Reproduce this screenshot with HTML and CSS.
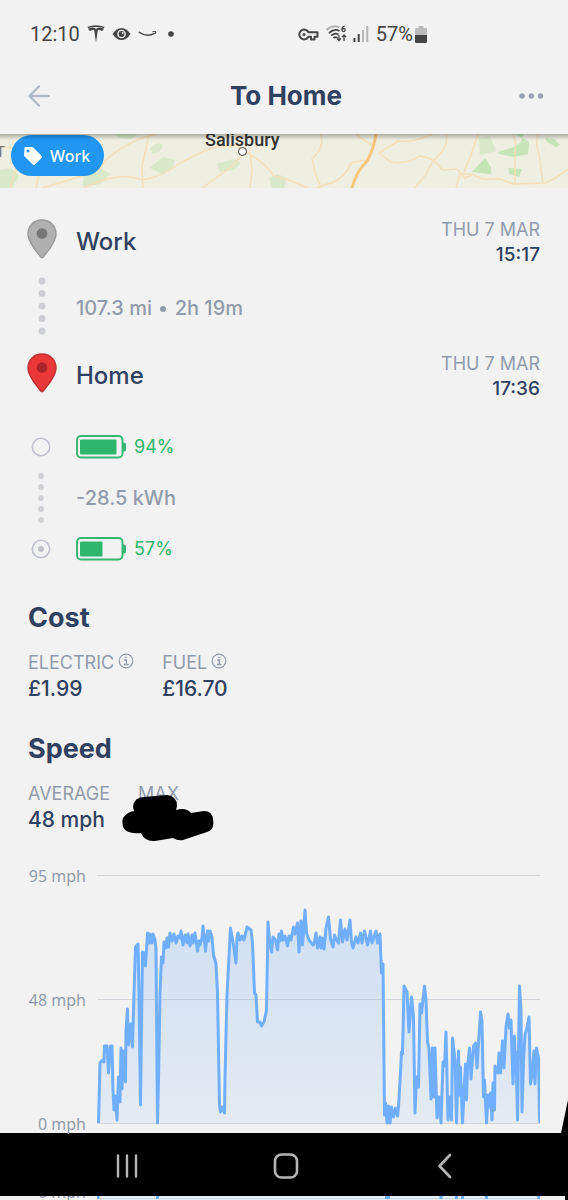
FILE: index.html
```html
<!DOCTYPE html>
<html lang="en">
<head>
<meta charset="utf-8">
<meta name="viewport" content="width=device-width, initial-scale=1">
<title>To Home</title>
<link rel="stylesheet" href="styles.css">
</head>
<body>
<div class="top">
  <div class="status">
    <div class="status-group">
      <span>12:10</span>
      <svg class="tesla" width="18" height="18" viewBox="0 0 18 18" fill="#444"><path d="M.5 1.800Q9-1.200 17.500 1.800L17 3Q9 .8 1 3ZM1 3.400Q4 2.500 7 2.700L9 4l2-1.300q3-.2 6 .7-.7 2.300-2.500 2.600-.5-1-2.600-1L10.800 5 9 17.500 7.200 5 6.100 5q-2.100 0-2.600 1Q1.700 5.700 1 3.400Z"/></svg>
      <svg width="19" height="14" viewBox="0 0 19 14"><path d="M.5 7Q4.500 1 9.500 1t9 6q-4 6-9 6t-9-6Z" fill="#444"/><circle cx="9.500" cy="7" r="4.300" fill="#f2f2f2"/><circle cx="9.500" cy="7" r="2.900" fill="#444"/><circle cx="10.600" cy="6" r="1" fill="#f2f2f2"/></svg>
      <svg width="19" height="8" viewBox="0 0 19 8" fill="none" stroke="#444"><path d="M.8 2Q8.500 7.500 16.500 3.400" stroke-width="1.500"/><path d="M14.500 1.800q2.500-.9 3.200-.3.400.6-.6 2.500" stroke-width="1.100"/></svg>
      <svg class="dot" width="6" height="6" viewBox="0 0 6 6"><circle cx="3" cy="3" r="2.800" fill="#444"/></svg>
    </div>
    <div class="status-group tight">
      <svg width="21" height="13" viewBox="0 0 21 13" fill="none" stroke="#444" stroke-width="2"><path d="M10.500 4.200A4.900 4.900 0 1 0 10.500 8.800H13v2.700h3.500V8.800h3V4.200Z" stroke-linejoin="round"/><circle cx="6" cy="6.500" r="1.500" fill="#444" stroke="none"/></svg>
      <svg width="22" height="18" viewBox="0 0 22 18" fill="none" stroke-width="1.700"><path d="M1.500 5Q7.500-.5 14 2.200" stroke="#aaa"/><path d="M4 8Q9.500 3.200 14.500 6M6.200 10.700q4-3.500 7.300-1.200M8.500 13.200q2-1.800 4-.4" stroke="#444"/><path d="M14 10v5.500m-2-2 2 2 2-2M19 16v-6m-2 2 2-2 2 2M19.500 1.200q-3 1-2.500 4 .2 1.400 1.700 1.400 1.500-.1 1.500-1.600 0-1.400-1.400-1.400-1.400 0-1.800 1.500" stroke="#444" stroke-width="1.300"/></svg>
      <svg width="17" height="16" viewBox="0 0 17 16"><path d="M1.500 12v4M5.700 8v8" stroke="#444" stroke-width="2"/><path d="M10 4v12M14.200 0v16" stroke="#b5b5b5" stroke-width="2"/></svg>
      <span class="percent">57%</span>
      <svg width="12" height="17" viewBox="0 0 12 17"><path d="M3.500 0h5v2H11q1 0 1 1v6H0V3q0-1 1-1h2.500Z" fill="#bbb"/><path d="M0 9h12v6.500q0 1.500-1.500 1.500h-9Q0 17 0 15.500Z" fill="#444"/></svg>
    </div>
  </div>
  <header class="header">
    <button class="icon-btn" aria-label="Back"><svg width="24" height="22" viewBox="0 0 24 22" fill="none" stroke="#b4bac5" stroke-width="2.400" stroke-linecap="round" stroke-linejoin="round"><path d="M11 1.500 1.500 11 11 20.500M1.500 11H20.800"/></svg></button>
    <h1>To Home</h1>
    <button class="icon-btn end" aria-label="More"><svg width="25" height="6" viewBox="0 0 25 6" fill="#9aa0b0"><circle cx="3" cy="3" r="2.700"/><circle cx="12.300" cy="3" r="2.700"/><circle cx="21.500" cy="3" r="2.700"/></svg></button>
  </header>
</div>
<main>
  <div class="map">
    <svg class="map-art" viewBox="0 0 568 54" preserveAspectRatio="xMidYMid slice">
      <rect width="568" height="54" fill="#eeeee1"/>
      <g fill="#d8e8c8"><path d="M0 36l12-2 7 8-7 12H0ZM150 34l13-11 12 3-3 9-10 5ZM114 0h24l-7 5-12-1ZM269 44l9-4 8 4-2 10h-12ZM84 38l18-3 8 5-10 10-17 3ZM217 30l16-5 8 4-7 7-14 2ZM479 4l11-2 6 15-16 4Z"/><path d="M150 14l7-5 6 2-3 6-7 3Z"/></g>
      <g fill="#c5e4b8"><path d="M472 38l13-14 6 9v7l-20-2ZM498 18l16-5 5-3 4-6 6 4-1 12-14 3-15-3ZM508 34l14 1-3 8-9-3ZM545 4l9 1 6 6-4 2-9-5ZM514 0h10l-2 4Z"/></g>
      <g fill="none" stroke="#f5dfb8" stroke-width="1.500"><path d="M42 54Q78 44 100 35L106 26Q131 4 159 0M84 54q35-18 58-8 20-3 35-15 15-9 35-17l24-3 10 7q18 10 28 24 18 4 38 14l12-5q20-4 27-22l14-3M149 0q-4 20-7 32l1 22M245 18l-14 15-29 21M250 17l2 19-2 18M320 0q6 12-8 25l4 16 4 10M356 0l9 7 8 4M379 19q8-5 19-12 15 2 34-7M379 19l12 9q19 2 28-6 15 1 23 14l15-1 8 9 7-3M446 0q3 10-7 21-10 10-12 18l-12 15M464 38q8-18 14-38M456 54l4-14 12 0 10 5 18 0 13 5 33-1 11-6 11-8M513 0q4 8 2 19 0 14 0 32M538 0q-3 12 1 20l4 30M0 13q17-1 20 7l-6 21-4 13M36 54l3-14"/></g>
      <path d="M376 0Q374 15 367 27 356 38 352 54" fill="none" stroke="#f8c77c" stroke-width="3"/>
    </svg>
    <span class="edge-letter">T</span>
    <span class="city">Salisbury<span class="city-dot"></span></span>
    <button class="tag"><svg width="20" height="20" viewBox="0 0 20 20"><path d="M1.500 1.800Q1.800 1 2.700 1H9q.8 0 1.500.7l8 8q1.200 1.200 0 2.400l-6.400 6.400q-1.200 1.200-2.400 0l-8-8Q1 10 1 9.200Z" fill="#fff"/><circle cx="5" cy="5" r="1.500" fill="#2196f3"/></svg>Work</button>
    <div class="map-shade"></div>
  </div>

  <section class="trip">
    <div class="stop">
      <svg class="pin" width="30" height="40" viewBox="0 0 30 40"><path d="M15 1C7 1 1 7 1 15c0 5 3 9.500 5.500 13.500L13.800 38q1.200 1.300 2.400 0l7.300-9.500C26 24.500 29 20 29 15 29 7 23 1 15 1Z" fill="#b0b0b0" stroke="#999" stroke-width="1.400"/><circle cx="15" cy="14.500" r="5.300" fill="#777"/></svg>
      <h2 class="place">Work</h2>
      <p class="when"><span class="label">THU 7 MAR</span><span class="time">15:17</span></p>
    </div>
    <div class="leg">
      <svg class="dots" width="8" height="58" viewBox="0 0 8 58" fill="#cdcdd4"><circle cx="4" cy="4" r="3.500"/><circle cx="4" cy="16.500" r="3.500"/><circle cx="4" cy="29" r="3.500"/><circle cx="4" cy="41.500" r="3.500"/><circle cx="4" cy="54" r="3.500"/></svg>
      <p class="muted">107.3 mi <span class="bullet"></span> 2h 19m</p>
    </div>
    <div class="stop">
      <svg class="pin" width="30" height="40" viewBox="0 0 30 40"><path d="M15 1C7 1 1 7 1 15c0 5 3 9.500 5.500 13.500L13.800 38q1.200 1.300 2.400 0l7.300-9.500C26 24.500 29 20 29 15 29 7 23 1 15 1Z" fill="#ea3838" stroke="#bd3035" stroke-width="1.400"/><circle cx="15" cy="14.500" r="5.300" fill="#aa2529"/></svg>
      <h2 class="place">Home</h2>
      <p class="when"><span class="label">THU 7 MAR</span><span class="time">17:36</span></p>
    </div>
  </section>

  <section class="energy">
    <div class="charge">
      <svg class="node" width="20" height="20" viewBox="0 0 20 20"><circle cx="10" cy="10" r="8.700" fill="none" stroke="#c0c2ce" stroke-width="1.600"/></svg>
      <svg width="50" height="24" viewBox="0 0 50 24"><rect x="1" y="1" width="45.500" height="21.500" rx="4" fill="none" stroke="#35b673" stroke-width="1.900"/><rect x="4" y="4.500" width="36.500" height="15" rx="1" fill="#2eb56e"/><path d="M47 7.500q3 0 3 2v5q0 2-3 2Z" fill="#35b673"/></svg>
      <span>94%</span>
    </div>
    <div class="leg used">
      <svg class="dots" width="8" height="52" viewBox="0 0 8 52" fill="#d0d0d5"><circle cx="4" cy="4" r="2.900"/><circle cx="4" cy="15" r="2.900"/><circle cx="4" cy="26" r="2.900"/><circle cx="4" cy="37" r="2.900"/><circle cx="4" cy="48" r="2.900"/></svg>
      <p class="muted">-28.5 kWh</p>
    </div>
    <div class="charge">
      <svg class="node" width="20" height="20" viewBox="0 0 20 20"><circle cx="10" cy="10" r="8.700" fill="none" stroke="#c0c2ce" stroke-width="1.600"/><circle cx="10" cy="10" r="3" fill="#bfc0c7"/></svg>
      <svg width="50" height="24" viewBox="0 0 50 24"><rect x="1" y="1" width="45.500" height="21.500" rx="4" fill="none" stroke="#35b673" stroke-width="1.900"/><rect x="4" y="4.500" width="22.500" height="15" rx="1" fill="#2eb56e"/><path d="M47 7.500q3 0 3 2v5q0 2-3 2Z" fill="#35b673"/></svg>
      <span>57%</span>
    </div>
  </section>

  <section class="stats">
    <h2>Cost</h2>
    <dl class="figures">
      <div><dt>ELECTRIC <svg class="info" width="16" height="16" viewBox="0 0 16 16" fill="none" stroke="#929bac"><circle cx="8" cy="8" r="6.800" stroke-width="1.200"/><path d="M6.300 7H8.300V11.500M6 11.500h4.500M7.200 4.400h1.600" stroke-width="1.400"/></svg></dt><dd>£1.99</dd></div>
      <div><dt>FUEL <svg class="info" width="16" height="16" viewBox="0 0 16 16" fill="none" stroke="#929bac"><circle cx="8" cy="8" r="6.800" stroke-width="1.200"/><path d="M6.300 7H8.300V11.500M6 11.500h4.500M7.200 4.400h1.600" stroke-width="1.400"/></svg></dt><dd>£16.70</dd></div>
    </dl>
  </section>

  <section class="stats">
    <h2>Speed</h2>
    <dl class="figures">
      <div><dt>AVERAGE</dt><dd>48 mph</dd></div>
      <div class="max"><dt>MAX</dt><dd class="hidden-value"><svg class="scribble" width="94" height="48" viewBox="0 0 94 48"><path d="M11 13Q12 3 22 3L45 1q10 1 10 11l-1 4q10-3 15 3l13-2q8 0 9 8 2 11-6 13L61 46q-5 1-10-2l-18 3q-10 1-14-8Q9 40 3 36-1 31 1 24q4-6 11-7Z"/></svg></dd></div>
    </dl>
  </section>

  <section class="chart">
    <div class="axis"><span>95 mph</span><span>48 mph</span><span>0 mph</span></div>
    <svg class="plot" viewBox="97 868 443 264" preserveAspectRatio="none" role="img" aria-label="Speed over the trip">
      <defs>
        <linearGradient id="fade" x1="0" y1="0" x2="0" y2="1"><stop offset="0" stop-color="#60a5fa" stop-opacity=".24"/><stop offset="1" stop-color="#60a5fa" stop-opacity=".1"/></linearGradient>
        <path id="speed" d="M98.500 1123L99 1103 100 1063 102.500 1060 104 1062 104.500 1046 107 1046 108.500 1073 110.500 1046 112 1046 113 1090 114 1110 115.500 1096 117 1120 118.500 1077 120 1102 121 1048 122 1089 123.500 1051 125.500 1082 126 1030 127.500 1009 128.500 1045 131 1024 132.500 1047 133.500 1010 135.500 947 138 944 139 993 140.500 1105 142.500 952 144 953 145.500 966 147.500 933 149 943 150 934 152 943 153 934 155 940 156 949 157.500 1123 158.500 1080 160 993 161.500 957 163 963 164 942 166 948 167 938 168.500 947 170 933 172 941 174 934 176 943 178 936 180 938 181 931 183 945 185 935 187 943 188 934 190 946 192 935 193 943 195 933 197.500 951 199 941 200 945 202 938 203 926 205.500 951 207.500 931 208.500 941 210 931 212 937 213.500 955 216 964 217.500 993 219.500 1105 220.500 1112 222.500 1107 224.500 1113 225 1077 227 995 229 957 230.500 928 233 942 236 963 237 938 238 933 240 940 242 936 244 940 247 927 251 930 252.500 943 254.500 993 256 995 257.500 1022 260 1022 261.500 1026 264 1022 266.500 1010 268 922 269.500 940 271.500 952 273 937 275.500 940 277.500 950 279 934 280 941 281.500 931 283 940 285 936 287.500 946 289 936 291 940 293.500 927 295 934 297.500 923 299 952 301 921 302.500 945 305 910 306.500 933 309 940 313 945 314.500 942 316 933 317.500 948 320 937 321 948 322.500 938 324 949 326 928 328.500 917 330.500 939 333 947 334.500 935 336 939 338.500 943 340.500 920 342.500 942 345 929 347 940 350 920 351.500 942 353 948 356 937 358 943 360.500 933 362 943 364.500 931 367.500 945 370.500 931 372 943 376 931 377.500 943 380 934 381.500 973 383 964 384.500 1115 385.500 1103 387 1123 388.500 1106 390 1123 391.500 1107 393.500 1117 395.500 1108 397.500 1116 398.500 1107 400.500 1073 401.500 1052 402.500 1054 404 986 407 992 409 1032 411.500 997 413.500 1017 415 1113 416.500 1077 418.500 1087 420 1004 421.500 1013 424.500 986 426 1000 427.500 1042 429 1048 431 1099 432.500 1048 434 1097 435 1048 437 1118 439 1097 441 1123 443 1062 444.500 1066 446 1032 448 1120 450 1097 451.500 1120 452.500 1038 455 1060 456.500 1123 458.500 1051 459.500 1095 460.500 1067 462.500 1123 465.500 1064 466.500 1100 467.500 1067 469.500 1048 471 1079 473.500 1046 475.500 1043 477 1068 480.500 1012 482 1022 483.500 1097 484.500 1080 486.500 1123 488 1095 489.500 1107 490.500 1093 492 1120 493 1083 494.500 1110 495 1066 498 1073 499 1053 500.500 1073 502.500 1041 504 1068 506 1027 508 1014 509.500 1028 511 1020 513 1084 514.500 1036 515.500 1073 516 1052 517.500 1120 519.500 986 521 1010 522 1112 523.500 1060 525 1035 527 1028 529 1017 530.500 1084 532.500 1073 534 1051 535 1084 536.500 1048 538.500 1058 539.500 1118 540 1123"/>
      </defs>
      <path d="M97 875.500H541M97 999.500H541M97 1123.500H541" stroke="#d3d7dc" stroke-width="1"/>
      <use href="#speed" fill="url(#fade)"/>
      <use href="#speed" fill="none" stroke="#70afff" stroke-width="3" stroke-linejoin="round"/>
    </svg>
    <svg class="corner" width="7" height="33" viewBox="0 0 7 33"><path d="M7 0V33H0Z"/></svg>
  </section>
</main>
<nav class="nav">
  <button aria-label="Recent apps"><svg width="24" height="26" viewBox="0 0 24 26" stroke="#b5b5b5" stroke-width="2.400" stroke-linecap="round"><path d="M3 2.500v21M12 2.500v21M21 2.500v21"/></svg></button>
  <button aria-label="Home"><svg width="26" height="26" viewBox="0 0 26 26" fill="none" stroke="#b5b5b5" stroke-width="2.600"><rect x="2" y="1.500" width="22" height="23" rx="6.500"/></svg></button>
  <button aria-label="Go back"><svg width="16" height="26" viewBox="0 0 16 26" fill="none" stroke="#b5b5b5" stroke-width="2.600" stroke-linecap="round" stroke-linejoin="round"><path d="M13 2 2.500 13l10.500 11"/></svg></button>
</nav>
<div class="overflow-strip">
  <div class="axis"><span>0 mph</span></div>
  <svg class="strip-plot" viewBox="97 0 443 4" preserveAspectRatio="none"><rect x="97" width="443" height="4" fill="#e5edf6"/><path d="M97 2.500H540" stroke="#ccdcec"/><path d="M98 0v3M157.500 0v3M385 1.500h5M441 0v3M456.500 0v3M462.500 0v3M486.500 0v3M539 0v3" fill="none" stroke="#70afff" stroke-width="3"/></svg>
</div>
</body>
</html>
```
FILE: styles.css
```css
* { box-sizing: border-box; }
body {
  margin: 0;
  background: #f2f2f2;
  color: #2f4060;
  font-family: Inter, "Liberation Sans", sans-serif;
}
h1, h2, p, dl, dd { margin: 0; }
button {
  border: 0;
  padding: 0;
  background: none;
  font: inherit;
  color: inherit;
  display: flex;
  align-items: center;
}
svg { display: block; flex: none; }

.status {
  display: flex;
  justify-content: space-between;
  height: 60px;
  padding: 8px 141px 0 30px;
  font: 20px/24px Roboto, sans-serif;
  color: #444;
}
.status-group { display: flex; align-items: center; gap: 7px; }
.status-group.tight { gap: 6px; }
.status-group.tight svg:last-child { margin-left: -4px; }
.dot { margin-left: 4px; }
.header {
  display: grid;
  grid-template-columns: 1fr auto 1fr;
  align-items: center;
  height: 74px;
  padding: 0 24px 2px 28px;
}
.header h1 { font-size: 26px; line-height: 32px; font-weight: 700; }
.icon-btn { height: 40px; }
.end { justify-self: end; }

.map { position: relative; height: 54px; overflow: hidden; }
.map-art { width: 100%; height: 100%; }
.map-shade {
  position: absolute;
  inset: 0 0 auto;
  height: 6px;
  background: linear-gradient(rgba(0, 0, 0, .28), rgba(0, 0, 0, 0));
}
.edge-letter {
  position: absolute;
  left: -4px;
  top: 9px;
  font: 15px/18px Roboto, sans-serif;
  color: #777;
}
.city {
  position: absolute;
  left: 205px;
  top: -5px;
  font: 500 18px/22px Roboto, sans-serif;
  color: #333;
}
.city-dot {
  position: absolute;
  left: 33px;
  top: 18px;
  width: 9px;
  height: 9px;
  border: 1px solid #444;
  border-radius: 50%;
  background: #fff;
}
.tag {
  position: absolute;
  left: 11px;
  top: 1px;
  height: 41px;
  padding: 0 14px 0 12px;
  gap: 7px;
  border-radius: 21px;
  background: #2196f3;
  color: #fff;
  font: 500 16px/20px "Noto Sans", sans-serif;
}

.trip { padding: 29px 28px 0 27px; }
.stop { display: flex; align-items: flex-start; height: 62px; }
.pin { margin-top: 2px; }
.place {
  margin: 9px 0 0 19px;
  font-size: 24px;
  line-height: 32px;
  font-weight: 500;
}
.when { margin-left: auto; text-align: right; font-size: 18px; line-height: 25px; }
.when span { display: block; }
.label, dt { color: #929bac; }
.when .time { font-size: 19px; font-weight: 500; }
.leg { display: flex; align-items: center; height: 72px; padding-left: 11px; }
.leg .dots { margin: 0 30px 18px 0; }
.leg .muted { margin-bottom: 14px; }
.muted { color: #929bac; font-size: 20px; line-height: 24px; font-weight: 500; }
.bullet {
  display: inline-block;
  width: 6px;
  height: 6px;
  margin: 0 3px 3px;
  border-radius: 50%;
  background: #929bac;
}

.energy { padding: 22px 28px 0 27px; }
.charge {
  display: flex;
  align-items: center;
  height: 24px;
  padding-left: 4px;
  color: #2eb56e;
  font-size: 18px;
  line-height: 24px;
}
.node { margin-right: 25px; }
.charge span { margin-left: 8px; }
.used { height: 78px; padding-left: 10px; }
.leg.used .dots { margin: 0 31px 0 0; }
.leg.used .muted { margin-bottom: 0; }

.stats { padding: 0 28px; margin-top: 41px; }
.stats h2 { font-size: 27px; line-height: 32px; font-weight: 700; }
.figures { display: flex; gap: 28px; margin-top: 16px; }
.figures dt {
  display: flex;
  align-items: center;
  gap: 4px;
  font-size: 18px;
  line-height: 25px;
}
.info { margin-bottom: 4px; }
.figures dd { font-size: 21px; line-height: 28px; font-weight: 500; }
.stats + .stats { margin-top: 30px; }
.hidden-value { position: relative; height: 28px; }
.scribble { position: absolute; left: -16px; top: -12px; }

.chart { position: relative; display: flex; gap: 11px; height: 265px; margin-top: 34px; padding: 0 28px; }
.axis {
  display: flex;
  flex-direction: column;
  justify-content: space-between;
  width: 58px;
  height: 264px;
  text-align: right;
  font: 16px/16px "Noto Sans", sans-serif;
  color: #929bac;
  white-space: nowrap;
}
.plot { flex: 1; min-width: 0; height: 264px; }
.corner { position: absolute; right: 0; bottom: 0; }
.nav {
  display: grid;
  grid-template-columns: 1fr 1fr 1fr;
  height: 63px;
  padding: 2px 43px 0 47px;
  background: #000;
}
.nav button { justify-content: center; }
.overflow-strip {
  display: flex;
  gap: 11px;
  height: 4px;
  padding: 0 25px 0 28px;
  border-right: 3px solid #000;
  overflow: hidden;
}
.overflow-strip .axis { height: 4px; justify-content: flex-end; }
.strip-plot { flex: 1; min-width: 0; height: 4px; }
```
